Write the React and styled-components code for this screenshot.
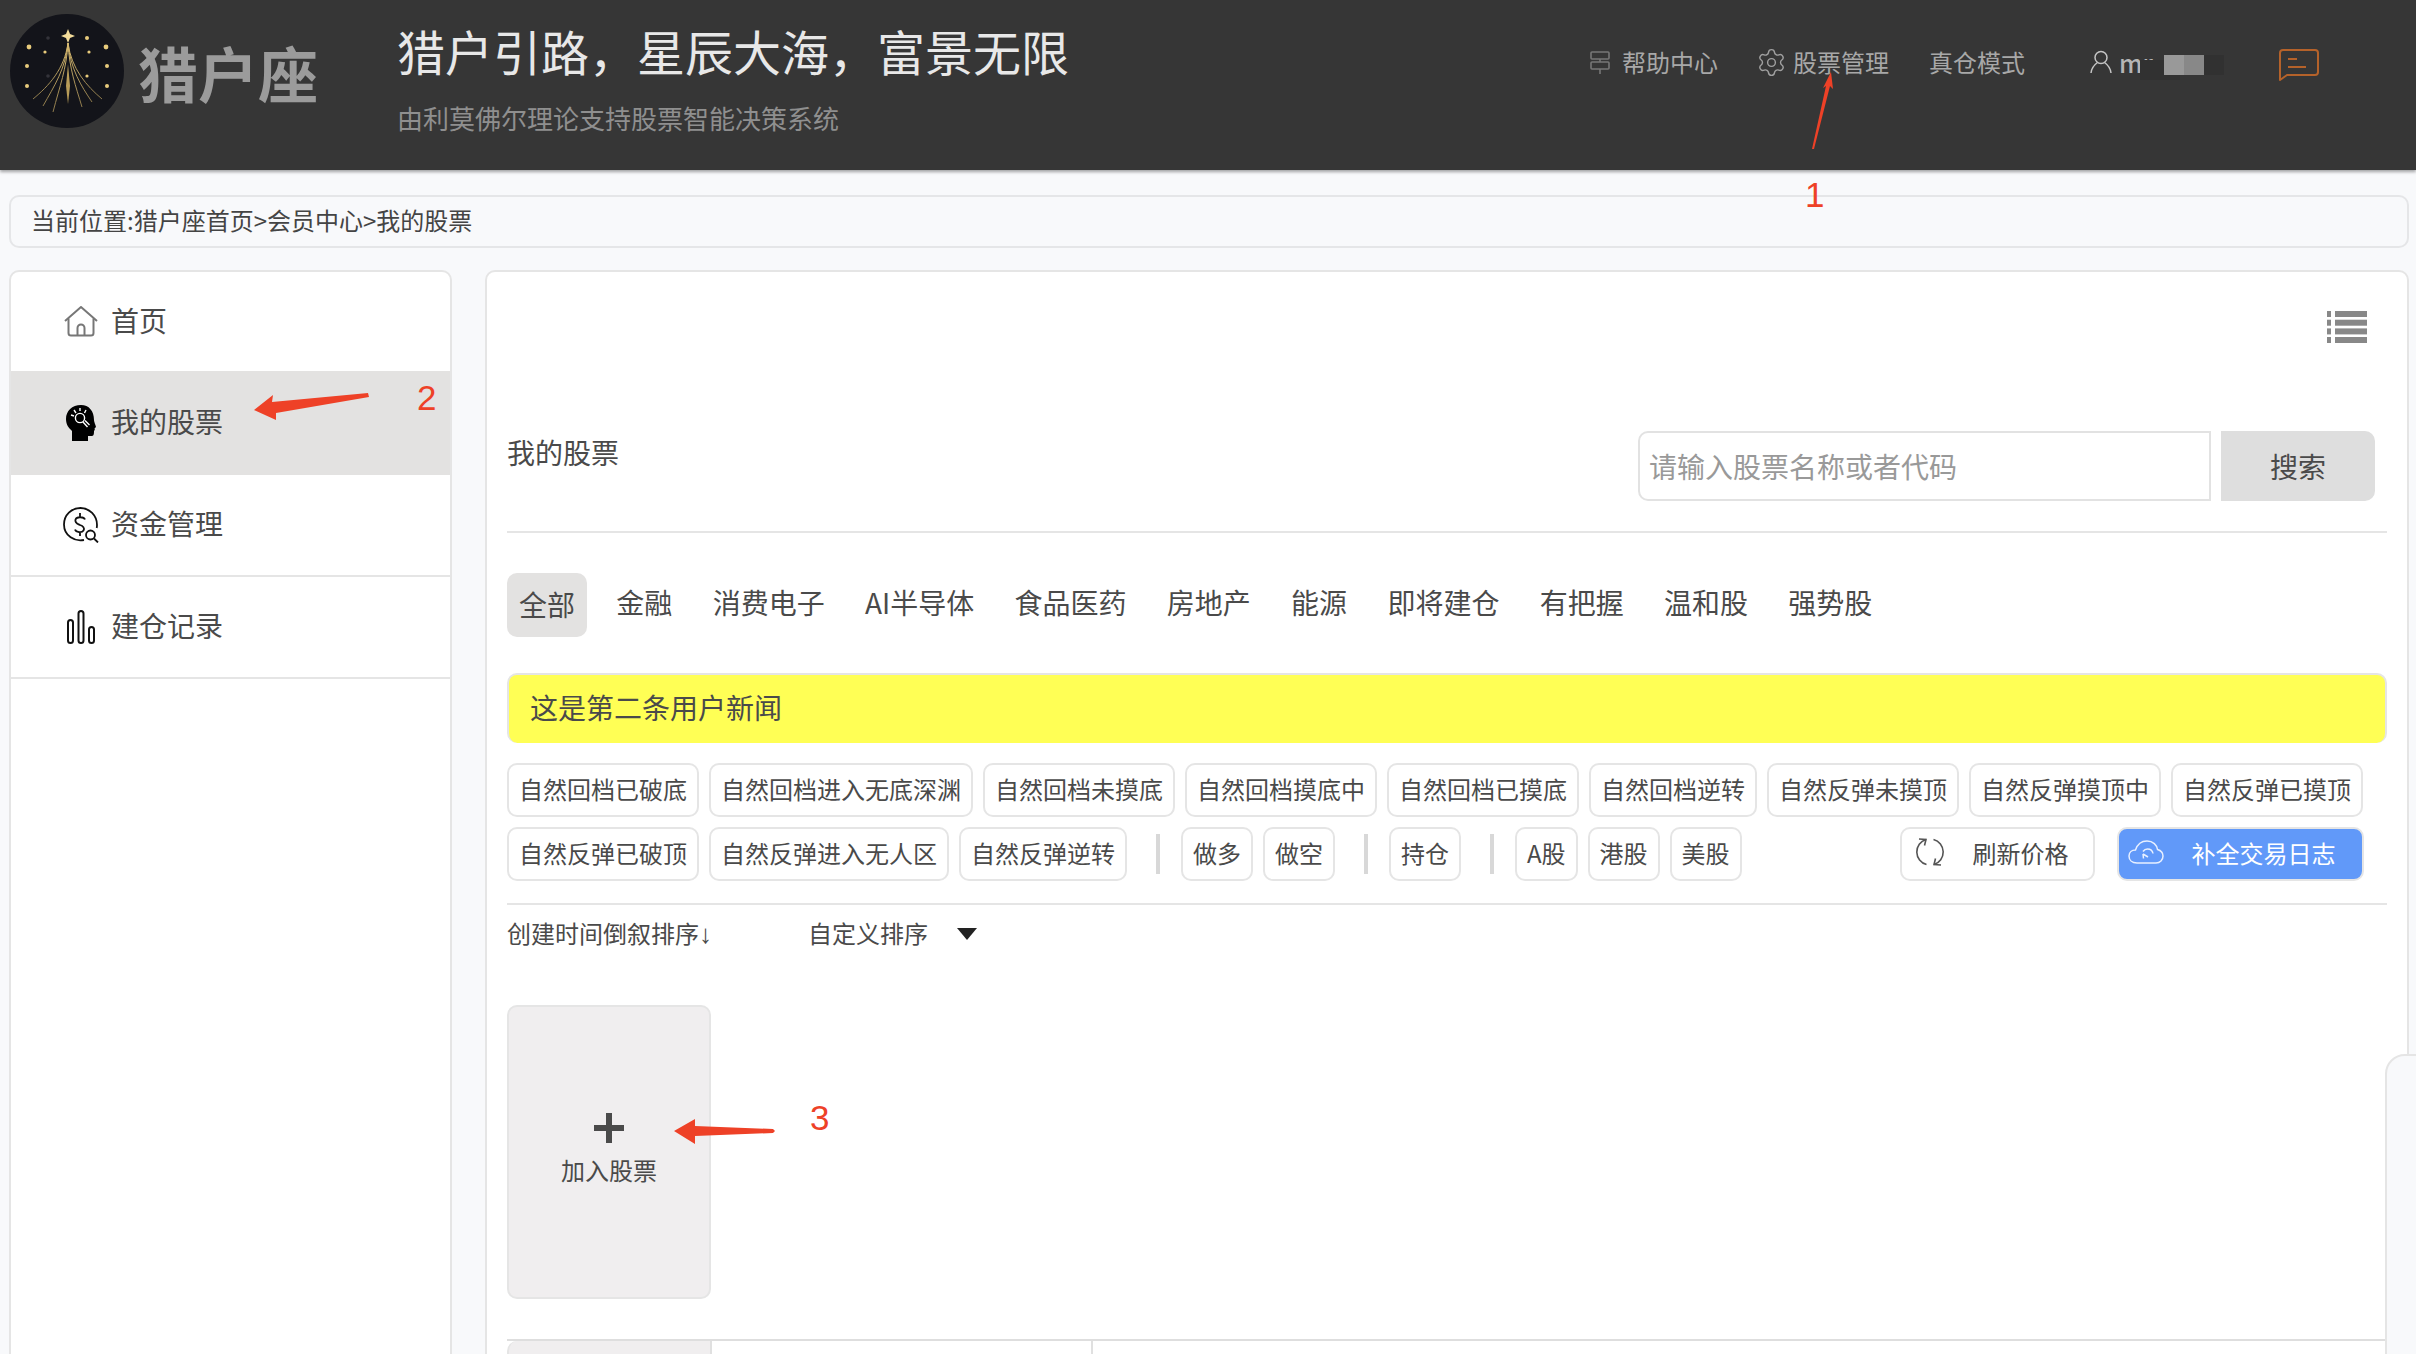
import React from 'react';
import styled, { createGlobalStyle } from 'styled-components';
import { Settings } from 'lucide-react';

const Global = createGlobalStyle`
  html, body { margin: 0; padding: 0; background: #f8f9fb; overflow: hidden; }
  body { font-family: "Noto Sans CJK SC", "Noto Sans", sans-serif; color: #4a4a4a; }
  * { box-sizing: border-box; }
`;

const Page = styled.div`
  position: relative;
  width: 2416px;
  height: 1354px;
  overflow: hidden;
  background: #f8f9fb;
`;

const Header = styled.header`
  display: flex;
  align-items: flex-start;
  height: 170px;
  padding-left: 10px;
  background: #363636;
  box-shadow: 0 2px 3px rgba(0, 0, 0, 0.35);
`;
const LogoMark = styled.svg`
  width: 114px;
  height: 114px;
  margin-top: 14px;
  flex: none;
`;
const LogoText = styled.div`
  margin: 30px 0 0 14px;
  width: 259px;
  font-size: 60px;
  line-height: 84px;
  font-weight: 700;
  color: #9b9b9b;
`;
const TitleBlock = styled.div`
  display: flex;
  flex-direction: column;
`;
const Title = styled.h1`
  margin: 14px 0 0;
  font-size: 48px;
  line-height: 72px;
  font-weight: 400;
  color: #e8e8e8;
`;
const Subtitle = styled.div`
  margin-top: 14px;
  font-size: 26px;
  line-height: 36px;
  color: #8f8f8f;
`;
const Nav = styled.nav`
  display: flex;
  align-items: center;
  gap: 40px;
  margin: 44px 97px 0 auto;
  height: 36px;
`;
const NavItem = styled.div`
  display: flex;
  align-items: center;
  gap: ${p => p.$gap || 8}px;
  font-size: 24px;
  line-height: 36px;
  color: #a8a8a8;
`;
const GearIcon = styled(Settings)`
  margin: 0 -2px;
`;
const UserBox = styled.div`
  display: flex;
  align-items: center;
  gap: 7px;
  margin-left: 25px;
  font-size: 25px;
  font-weight: 500;
  color: #b5b5b5;
`;
const UserName = styled.span`
  display: block;
  width: 25px;
  white-space: nowrap;
`;
const BlurBlock = styled.span`
  display: block;
  width: 40px;
  height: 20px;
  margin: 6px 0 0 13px;
  background: linear-gradient(90deg, #999 50%, #888 50%);
  box-shadow: 20px 0 0 #313131, -24px 5px 0 #313131;
`;
const ChatIcon = styled.svg`
  width: 40px;
  height: 32px;
  margin: 6px 0 0 68px;
  display: block;
`;

const Crumb = styled.div`
  display: flex;
  align-items: center;
  height: 53px;
  margin: 25px 7px 0 9px;
  padding: 0 0 4px 20px;
  border: 2px solid #e5e6e8;
  border-radius: 10px;
  font-size: 24px;
  color: #444;
`;

const Body = styled.div`
  display: flex;
  gap: 33px;
  margin: 22px 7px 0 9px;
  height: 1100px;
`;
const Side = styled.aside`
  width: 443px;
  flex: none;
  background: #fff;
  border: 2px solid #e5e5e5;
  border-radius: 10px;
  overflow: hidden;
`;
const SideRow = styled.div`
  display: flex;
  align-items: center;
  gap: 12px;
  height: 102px;
  padding-left: 52px;
  font-size: 28px;
  color: #4a4a4a;
  border-bottom: 2px solid #e5e5e5;
  &:first-child { height: 99px; border-bottom: 0; }
  ${p => p.$active && 'height: 104px; border-bottom: 0; background: #e3e2e1;'}
`;
const SideLabel = styled.span`
  margin-bottom: 4px;
`;
const IconSlot = styled.span`
  display: flex;
  justify-content: center;
  align-items: center;
  width: 36px;
  height: 36px;
`;

const Main = styled.main`
  flex: 1;
  min-width: 0;
  background: #fff;
  border: 2px solid #e5e5e5;
  border-radius: 10px;
  padding: 0 20px;
  overflow: hidden;
`;
const ListBar = styled.div`
  display: flex;
  justify-content: flex-end;
  padding: 39px 20px 0 0;
`;
const ListIcon = styled.svg`
  width: 40px;
  height: 32px;
  display: block;
`;
const SearchRow = styled.div`
  display: flex;
  align-items: flex-start;
  margin-top: 88px;
  padding: 0 12px 30px 0;
  border-bottom: 2px solid #e5e5e5;
`;
const PageLabel = styled.div`
  font-size: 28px;
  line-height: 42px;
`;
const SearchInput = styled.input`
  width: 573px;
  height: 70px;
  margin-left: auto;
  padding: 0 9px;
  border: 2px solid #e2e2e2;
  border-radius: 10px 0 0 10px;
  font: inherit;
  font-size: 28px;
  outline: none;
  &::placeholder { color: #999; opacity: 1; }
`;
const SearchButton = styled.button`
  width: 154px;
  height: 70px;
  margin-left: 10px;
  border: 0;
  border-radius: 0 10px 10px 0;
  background: #dedede;
  font: inherit;
  font-size: 28px;
  color: #4a4a4a;
`;
const Tabs = styled.div`
  display: flex;
  gap: 16.3px;
  margin-top: 40px;
`;
const Tab = styled.div`
  display: flex;
  align-items: center;
  height: 64px;
  padding: 0 12px ${p => (p.$active ? 2 : 6)}px;
  margin-right: ${p => (p.$active ? 1 : 0)}px;
  border-radius: 10px;
  font-size: 28px;
  color: #4a4a4a;
  ${p => p.$active && 'background: #e3e2e1;'}
`;
const News = styled.div`
  display: flex;
  align-items: center;
  height: 70px;
  margin-top: 36px;
  padding: 0 0 4px 21px;
  border: 2px solid #e5e5e5;
  border-bottom: 0;
  border-radius: 10px;
  background: #ffff55;
  font-size: 28px;
  color: #4a4a4a;
`;
const TagRow = styled.div`
  display: flex;
  align-items: center;
  gap: 10px;
  margin-top: ${p => p.$top}px;
`;
const Tag = styled.div`
  display: flex;
  align-items: center;
  height: 54px;
  padding: 0 10px 4px;
  border: 2px solid #e5e5e5;
  border-radius: 10px;
  background: #fff;
  font-size: 24px;
  white-space: nowrap;
  color: #4a4a4a;
`;
const Divider = styled.span`
  width: 4px;
  height: 40px;
  margin: 0 11px 0 19px;
  background: #d8d8d8;
`;
const ActionButton = styled(Tag)`
  gap: 28px;
  width: ${p => p.$w}px;
  margin-left: ${p => p.$ml}px;
  padding-left: ${p => p.$pl}px;
  ${p => p.$primary && 'background: #6199f9; color: #fff;'}
`;
const RowLine = styled.div`
  height: 2px;
  margin-top: 22px;
  background: #e5e5e5;
`;
const SortRow = styled.div`
  display: flex;
  align-items: center;
  height: 36px;
  margin-top: 11px;
  padding-bottom: 3px;
  font-size: 24px;
`;
const DownMark = styled.span`
  display: inline-block;
  width: 13px;
  font-family: "Liberation Sans", Arial, sans-serif;
  font-size: 26px;
  line-height: 1;
`;
const SortCustom = styled.span`
  margin-left: 96px;
`;
const Caret = styled.span`
  width: 0;
  height: 0;
  margin: 3px 0 0 29px;
  border-left: 10px solid transparent;
  border-right: 10px solid transparent;
  border-top: 12px solid #222;
`;
const AddCard = styled.div`
  display: flex;
  flex-direction: column;
  align-items: center;
  width: 204px;
  height: 294px;
  margin-top: 53px;
  padding-top: 106px;
  border: 2px solid #e5e5e5;
  border-radius: 10px;
  background: #f0eeef;
`;
const PlusIcon = styled.svg`
  width: 30px;
  height: 30px;
  display: block;
`;
const AddLabel = styled.div`
  margin-top: 9px;
  font-size: 24px;
  line-height: 36px;
`;
const StockRow = styled.div`
  display: flex;
  height: 60px;
  margin: 40px -40px 0 0;
  border-top: 2px solid #dedede;
`;
const StockCell = styled.div`
  height: 60px;
  width: ${p => p.$w}px;
  border-right: 2px solid #e0e0e0;
  ${p => p.$thumb && 'background: #f0eeef; border-left: 2px solid #e5e5e5; border-top-left-radius: 10px;'}
`;

const FloatTab = styled.div`
  position: absolute;
  left: 2385px;
  top: 1054px;
  width: 60px;
  height: 320px;
  background: #f8f9fb;
  border: 2px solid #e5e5e5;
  border-radius: 20px 0 0 0;
`;
const Markup = styled.svg`
  position: absolute;
  left: 0;
  top: 0;
  width: 2416px;
  height: 1354px;
  pointer-events: none;
`;
const MarkNumber = styled.span`
  position: absolute;
  left: ${p => p.$x}px;
  top: ${p => p.$y}px;
  font-family: "Liberation Sans", Arial, sans-serif;
  font-size: 35px;
  line-height: 36px;
  color: #ee4127;
`;

const stars = [[77,24,2],[96,33,2.4],[19,33,2.4],[35,38,1.6],[79,38,1.6],[17,52,2],[97,52,2],[17,72,2],[97,72,2],[77,62,1.6]];
const rays = [[23,85],[33,92],[43,98],[58,96],[72,93],[82,88],[92,85]];

const Logo = () => (
  <LogoMark viewBox="0 0 114 114">
    <defs>
      <linearGradient id="gold" x1="0" y1="0" x2="0" y2="1">
        <stop offset="0" stopColor="#d9bb70" />
        <stop offset="1" stopColor="#8d7a4c" />
      </linearGradient>
    </defs>
    <circle cx="57" cy="57" r="57" fill="#13141a" />
    <path d="M58 15 L60 20 L65 22 L60 24 L58 29 L56 24 L51 22 L56 20 Z" fill="#f4dc9a" />
    {stars.map(([x, y, r]) => <circle key={x + '-' + y} cx={x} cy={y} r={r} fill="#e8cb7c" />)}
    <circle cx="38" cy="24" r="1.8" fill="#33333a" />
    <circle cx="38" cy="62" r="1.8" fill="#33333a" />
    {rays.map(([x, y]) => (
      <path key={x} d={`M58 29 C${58 + (x - 58) * 0.1} 55 ${58 + (x - 58) * 0.55} 72 ${x} ${y}`} fill="none" stroke="url(#gold)" strokeWidth="1" />
    ))}
    <path d="M58 50 L60 72 L58 90 L56 72 Z" fill="#b89c58" />
  </LogoMark>
);

const HelpIcon = () => (
  <svg width="20" height="23" viewBox="0 0 20 23" fill="none" stroke="#777" strokeWidth="1.6">
    <rect x="1" y="1" width="18" height="7" rx="1" />
    <rect x="1" y="11" width="18" height="7" rx="1" />
    <path d="M10 8 V11 M10 18 V23" />
  </svg>
);
const UserIcon = () => (
  <svg width="22" height="24" viewBox="0 0 22 24" fill="none" stroke="#c4c4c4" strokeWidth="1.5">
    <circle cx="11" cy="7.500" r="6" />
    <path d="M1 23 C1.500 18 4 15 7.500 12.500 M21 23 C20.500 18 18 15 14.500 12.500" />
  </svg>
);
const Chat = () => (
  <ChatIcon viewBox="0 0 40 32" fill="none" stroke="#b5622a" strokeWidth="2">
    <path d="M1 31 V4 a3 3 0 0 1 3 -3 H36 a3 3 0 0 1 3 3 V23 a3 3 0 0 1 -3 3 H8 Z" strokeLinejoin="round" />
    <path d="M9 10 H18 M9 18 H27" />
  </ChatIcon>
);
const HomeIcon = () => (
  <svg width="34" height="31" viewBox="0 0 34 31" fill="none" stroke="#777" strokeWidth="2" strokeLinejoin="round">
    <path d="M1 15 L17 1 L33 15" />
    <path d="M4.500 12.500 V27 a2.500 2.500 0 0 0 2.500 2.500 H27 a2.500 2.500 0 0 0 2.500 -2.500 V12.500" />
    <path d="M13.500 29.500 V22 a3.500 3.500 0 0 1 7 0 V29.500" />
  </svg>
);
const HeadIcon = () => (
  <svg width="30" height="36" viewBox="0 0 30 36">
    <path d="M15 0 C6 0 0 6 0 14 C0 20 3 23 6 26 V36 H22 V31 H26 C28 31 28 28 28 26 C29 25 29 24 28.500 23.500 L30 22 C30 21 28 17 28 15 C28 6 23 0 15 0 Z" fill="#000" />
    <g fill="none" stroke="#fff" strokeWidth="1.4">
      <circle cx="14" cy="13" r="4.600" />
      <path d="M17 17 L21.500 22 M19 15.500 L23.500 20 M8 5 L10 8 M14 3 V6 M20 5 L18.500 8 M5 10 L8 11" />
    </g>
  </svg>
);
const MoneyIcon = () => (
  <svg width="36" height="36" viewBox="0 0 36 36" fill="none" stroke="#111" strokeWidth="1.8">
    <path d="M21 33 C12 35 1 29 1 17.500 C1 8 8.500 1 17.500 1 C26.500 1 34 8.500 34 18 C34 19 33.900 20 33.700 21" />
    <path d="M22 12.500 C21 10 14 9 12.500 12.500 C11.500 16 15 17 17 18 C20 19 22 21 20.500 23.500 C19 26 13 25.500 12 22.500 M17 6 V9.500 M17 25 V29" />
    <circle cx="27.500" cy="28" r="4.500" />
    <path d="M31 31.500 L35 35.500" />
  </svg>
);
const BarsIcon = () => (
  <svg width="28" height="34" viewBox="0 0 28 34" fill="none" stroke="#111" strokeWidth="2">
    <rect x="1" y="10" width="5" height="23" rx="2.500" />
    <rect x="11.500" y="1" width="5" height="32" rx="2.500" />
    <rect x="22" y="17" width="5" height="16" rx="2.500" />
  </svg>
);
const ListGlyph = () => (
  <ListIcon viewBox="0 0 40 32" fill="#888">
    {[0, 8.7, 17.4, 26].map(y => (
      <g key={y}>
        <rect x="0" y={y} width="4" height="6" />
        <rect x="8" y={y} width="32" height="6" />
      </g>
    ))}
  </ListIcon>
);
const RefreshIcon = () => (
  <svg width="30" height="30" viewBox="0 0 30 30" fill="none" stroke="#555" strokeWidth="1.6">
    <path d="M11 2.500 A13 13 0 0 0 11.500 27.500" />
    <path d="M19 27.500 A13 13 0 0 0 18.500 2.500" />
    <path d="M4 2 L11 2.500 L9.500 8.500 M26 28 L19 27.500 L20.500 21.500" />
  </svg>
);
const CloudIcon = () => (
  <svg width="36" height="24" viewBox="0 0 36 24" fill="none" stroke="#e8f0ff" strokeWidth="1.5">
    <path d="M9 23 C4 23 1 20 1 16 C1 12 4 10 7.500 10 C9.500 4 14 1 19 1 C25 1 29 5 29.500 9.500 C33 10.500 35 13 35 16 C35 20 32 23 28 23 Z" />
    <path d="M25 13.500 C24.500 10.500 22 9 19.500 9 C17.500 9 16 10 15 11.500 M20 17 L15 14 M15 14 L15.500 18.500" />
  </svg>
);

const tagsOne = ['自然回档已破底','自然回档进入无底深渊','自然回档未摸底','自然回档摸底中','自然回档已摸底','自然回档逆转','自然反弹未摸顶','自然反弹摸顶中','自然反弹已摸顶'];
const tabs = ['金融','消费电子','AI半导体','食品医药','房地产','能源','即将建仓','有把握','温和股','强势股'];

export default function App() {
  return (
    <Page>
      <Global />
      <Header>
        <Logo />
        <LogoText>猎户座</LogoText>
        <TitleBlock>
          <Title>猎户引路，星辰大海，富景无限</Title>
          <Subtitle>由利莫佛尔理论支持股票智能决策系统</Subtitle>
        </TitleBlock>
        <Nav>
          <NavItem $gap={12}><HelpIcon />帮助中心</NavItem>
          <NavItem $gap={8}><GearIcon size={31} strokeWidth={1.1} color="#a0a0a0" />股票管理</NavItem>
          <NavItem>真仓模式</NavItem>
          <UserBox>
            <UserIcon />
            <UserName>mr</UserName>
            <BlurBlock />
            <Chat />
          </UserBox>
        </Nav>
      </Header>

      <Crumb>当前位置:猎户座首页&gt;会员中心&gt;我的股票</Crumb>

      <Body>
        <Side>
          <SideRow><IconSlot><HomeIcon /></IconSlot><SideLabel>首页</SideLabel></SideRow>
          <SideRow $active><IconSlot><HeadIcon /></IconSlot><SideLabel>我的股票</SideLabel></SideRow>
          <SideRow><IconSlot><MoneyIcon /></IconSlot><SideLabel>资金管理</SideLabel></SideRow>
          <SideRow><IconSlot><BarsIcon /></IconSlot><SideLabel>建仓记录</SideLabel></SideRow>
        </Side>
        <Main>
          <ListBar><ListGlyph /></ListBar>
          <SearchRow>
            <PageLabel>我的股票</PageLabel>
            <SearchInput placeholder="请输入股票名称或者代码" />
            <SearchButton>搜索</SearchButton>
          </SearchRow>
          <Tabs>
            <Tab $active>全部</Tab>
            {tabs.map(t => <Tab key={t}>{t}</Tab>)}
          </Tabs>
          <News>这是第二条用户新闻</News>
          <TagRow $top={20}>
            {tagsOne.map(t => <Tag key={t}>{t}</Tag>)}
          </TagRow>
          <TagRow $top={10}>
            <Tag>自然反弹已破顶</Tag>
            <Tag>自然反弹进入无人区</Tag>
            <Tag>自然反弹逆转</Tag>
            <Divider />
            <Tag>做多</Tag>
            <Tag>做空</Tag>
            <Divider />
            <Tag>持仓</Tag>
            <Divider />
            <Tag>A股</Tag>
            <Tag>港股</Tag>
            <Tag>美股</Tag>
            <ActionButton $w={195} $pl={13} $ml={148}><RefreshIcon />刷新价格</ActionButton>
            <ActionButton $w={247} $pl={9} $ml={12} $primary><CloudIcon />补全交易日志</ActionButton>
          </TagRow>
          <RowLine />
          <SortRow>
            <span>创建时间倒叙排序<DownMark>↓</DownMark></span>
            <SortCustom>自定义排序</SortCustom>
            <Caret />
          </SortRow>
          <AddCard>
            <PlusIcon viewBox="0 0 30 30" fill="#4a4a4a">
              <rect x="12" y="0" width="6" height="30" />
              <rect x="0" y="12" width="30" height="6" />
            </PlusIcon>
            <AddLabel>加入股票</AddLabel>
          </AddCard>
          <StockRow>
            <StockCell $thumb $w={205} />
            <StockCell $w={381} />
          </StockRow>
        </Main>
      </Body>

      <FloatTab />

      <Markup viewBox="0 0 2416 1354" fill="#ee4127">
        <polygon points="1812,149 1826,86 1823,88 1831,72 1833,89 1830,86 1814,149" />
        <polygon points="254,410 273,395 272,402 368,393 369,397 276,413 276,420" />
        <polygon points="674,1131 695,1119 695,1126 773,1129 775,1131 773,1133 695,1136 695,1144" />
      </Markup>
      <MarkNumber $x={1805} $y={177}>1</MarkNumber>
      <MarkNumber $x={417} $y={380}>2</MarkNumber>
      <MarkNumber $x={810} $y={1100}>3</MarkNumber>
    </Page>
  );
}
